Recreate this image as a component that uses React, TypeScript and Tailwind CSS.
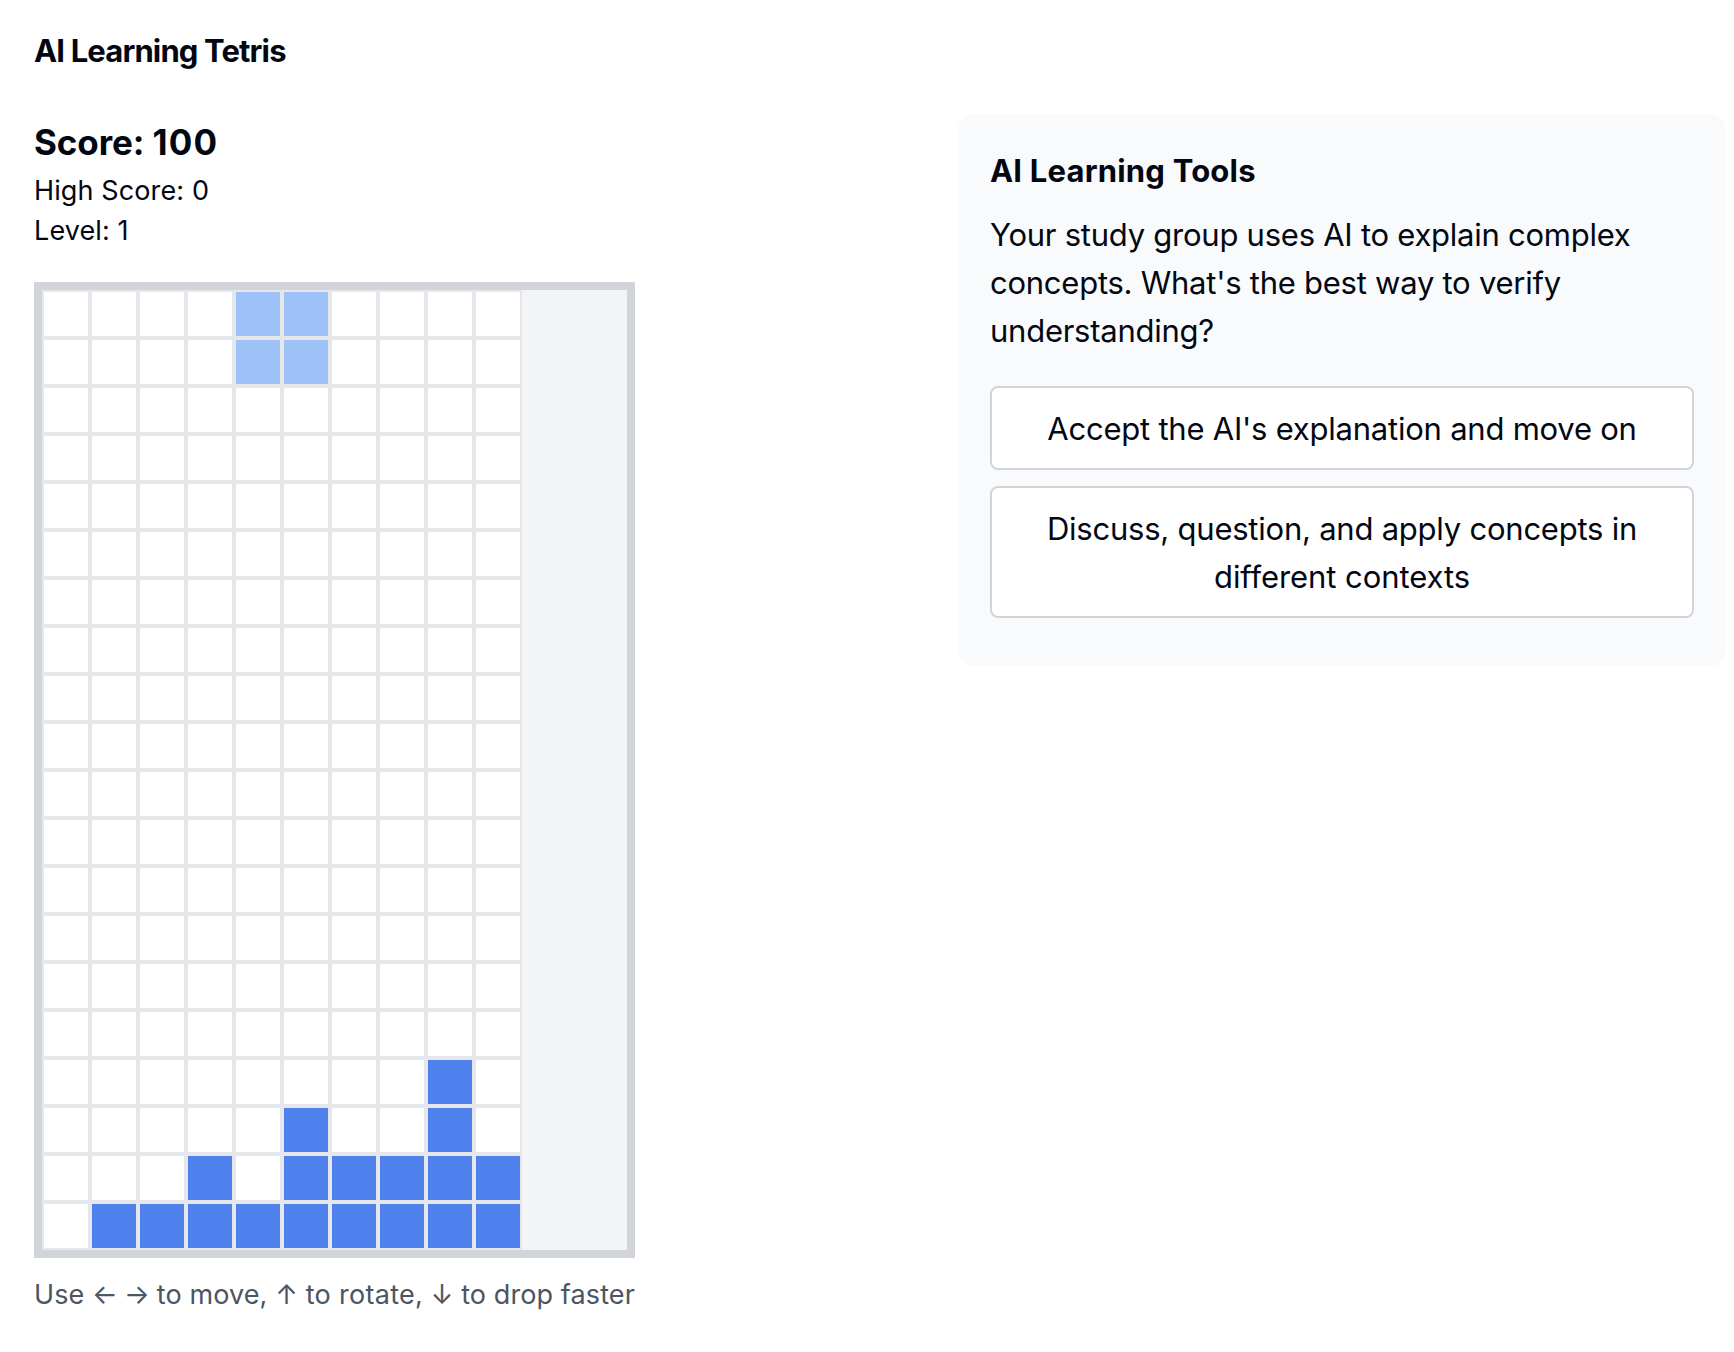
import type { ReactNode } from "react";

type CellKind = "empty" | "piece" | "locked";

const PIECE_ROWS = ["....PP....", "....PP...."];
const EMPTY_ROWS = Array.from({ length: 14 }, () => "..........");
const STACK_ROWS = ["........X.", ".....X..X.", "...X.XXXXX", ".XXXXXXXXX"];
const ROWS = [...PIECE_ROWS, ...EMPTY_ROWS, ...STACK_ROWS];

const KINDS: Record<string, CellKind> = { ".": "empty", P: "piece", X: "locked" };

const FILLS: Record<CellKind, string> = {
  empty: "bg-white",
  piece: "bg-[#9dc3f8]",
  locked: "bg-[#4e80ee]",
};

function Board() {
  return (
    <div className="w-[601px] border-8 border-[#d1d5da] bg-[#f3f4f6]">
      <div className="grid w-[480px] grid-cols-10">
        {ROWS.flatMap((row, y) =>
          row
            .split("")
            .map((ch, x) => (
              <div
                key={`${y}-${x}`}
                className={`size-12 border-2 border-[#e5e7eb] ${FILLS[KINDS[ch]]}`}
              />
            )),
        )}
      </div>
    </div>
  );
}

function Answer({ children }: { children: ReactNode }) {
  return (
    <button className="block w-full rounded-lg border-2 border-[#d1d5da] bg-white px-4 pt-[17px] pb-[15px] text-[31px] leading-[48px] tracking-[-0.23px]">
      {children}
    </button>
  );
}

function Quiz() {
  return (
    <section className="w-[768px] shrink-0 rounded-2xl bg-[#f9fafb] px-8 pt-[33px] pb-12">
      <h2 className="mb-4 text-[31px] leading-[48px] font-bold tracking-[0.2px]">AI Learning Tools</h2>
      <p className="mb-[31px] text-[31px] leading-[48px] tracking-[-0.25px]">
        Your study group uses AI to explain complex
        <br />
        concepts. What's the best way to verify
        <br />
        understanding?
      </p>
      <div className="flex flex-col gap-4">
        <Answer>Accept the AI's explanation and move on</Answer>
        <Answer>
          Discuss, question, and apply concepts in
          <br />
          <span className="tracking-[-0.08px]">different contexts</span>
        </Answer>
      </div>
    </section>
  );
}

export default function App() {
  return (
    <div className="min-h-[1352px] w-[1734px] bg-white pt-[35px] pr-2 pl-[34px] font-[Inter,sans-serif] text-[#030712]">
      <h1 className="text-[31px] leading-8 font-[650] tracking-[-0.85px]">AI Learning Tetris</h1>
      <div className="mt-[47px] flex items-start justify-between">
        <div>
          <p className="text-[35px] leading-[56px] font-bold tracking-[-0.1px]">
            Score: <span className="tracking-[1.1px]">100</span>
          </p>
          <div className="pt-px pb-[31px] text-[27px] leading-10 tracking-[0.12px]">
            <p>High Score: 0</p>
            <p>Level: 1</p>
          </div>
          <Board />
          <p className="mt-[17px] text-[27px] leading-10 tracking-[0.1px] whitespace-nowrap text-[#4b5563]">
            Use <span className="tracking-[-0.7px]">← →</span> to move, ↑
            <span className="tracking-[0.3px]"> to rotate,</span> ↓ to drop faster
          </p>
        </div>
        <Quiz />
      </div>
    </div>
  );
}
